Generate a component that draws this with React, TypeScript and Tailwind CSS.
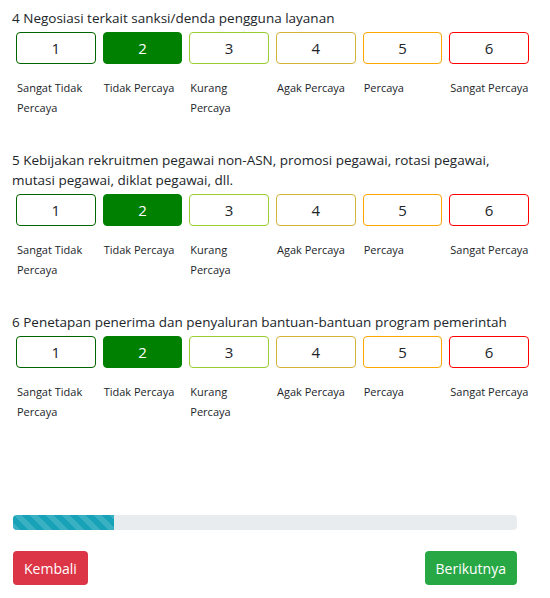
const options = [
    { value: 1, label: ["Sangat Tidak", "Percaya"], box: "border-[#006400] bg-white text-[#212529]" },
    { value: 2, label: ["Tidak Percaya"], box: "border-[#008000] bg-[#008000] text-white" },
    { value: 3, label: ["Kurang", "Percaya"], box: "border-[#9acd32] bg-white text-[#212529]" },
    { value: 4, label: ["Agak Percaya"], box: "border-[#d4b33a] bg-white text-[#212529]" },
    { value: 5, label: ["Percaya"], box: "border-[#ffa500] bg-white text-[#212529]" },
    { value: 6, label: ["Sangat Percaya"], box: "border-[#ff0000] bg-white text-[#212529]" },
];

const questions = [
    "4 Negosiasi terkait sanksi/denda pengguna layanan",
    "5 Kebijakan rekruitmen pegawai non-ASN, promosi pegawai, rotasi pegawai, mutasi pegawai, diklat pegawai, dll.",
    "6 Penetapan penerima dan penyaluran bantuan-bantuan program pemerintah",
];

function Question({ title }: { title: string }) {
    return (
        <div className="mb-8">
            <p className="pl-3 pr-10 text-[13.5px] leading-5 text-[#212529]">{title}</p>
            <div className="mt-1 ml-4 w-[513px] grid grid-cols-6 gap-x-[7px]">
                {options.map((o) => (
                    <div key={o.value}>
                        <div
                            className={`h-8 rounded-[4px] border flex items-center justify-center text-[15px] ${o.box}`}
                        >
                            {o.value}
                        </div>
                        <div className="mt-[14px] pl-px text-[11px] leading-5 text-[#212529] whitespace-nowrap">
                            {o.label.map((l) => (
                                <div key={l}>{l}</div>
                            ))}
                        </div>
                    </div>
                ))}
            </div>
        </div>
    );
}

export default function App() {
    return (
        <div className="w-[550px] h-[598px] bg-white pt-2 font-['Open_Sans',sans-serif] overflow-hidden">
            {questions.map((q) => (
                <Question key={q} title={q} />
            ))}

            <div className="ml-[13px] w-[504px] mt-[93px]">
                <div className="h-[15px] rounded-[4px] bg-[#e9ecef] overflow-hidden flex">
                    <div className="w-[20%] bg-[#17a2b8] bg-[linear-gradient(45deg,rgba(255,255,255,.15)_25%,transparent_25%,transparent_50%,rgba(255,255,255,.15)_50%,rgba(255,255,255,.15)_75%,transparent_75%,transparent)] bg-[length:1rem_1rem]" />
                </div>

                <div className="mt-[21px] flex justify-between">
                    <button className="h-[34px] px-[11px] rounded-[4px] bg-[#dc3545] text-white text-[14px]">
                        Kembali
                    </button>
                    <button className="h-[34px] px-[11px] rounded-[4px] bg-[#28a745] text-white text-[14px]">
                        Berikutnya
                    </button>
                </div>
            </div>
        </div>
    );
}
